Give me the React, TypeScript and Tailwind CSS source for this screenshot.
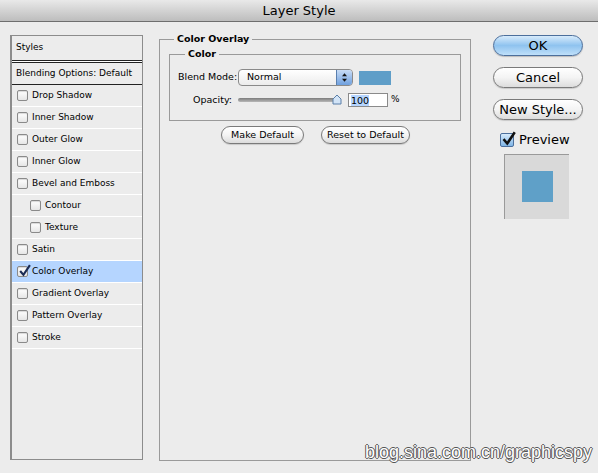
const font = "font-['Lucida_Grande','DejaVu_Sans',sans-serif]";

function Check({ checked = false }: { checked?: boolean }) {
  return (
    <div className="relative h-[11px] w-[11px] shrink-0 rounded-[2px] border border-[#8a8a8a] bg-gradient-to-b from-white to-[#e6e6e6] shadow-[inset_0_1px_1px_rgba(0,0,0,0.15)]">
      {checked && (
        <svg viewBox="0 0 12 12" className="absolute -top-[3px] left-[0px] h-[13px] w-[13px]">
          <path d="M2 6.5 L5 10 L11 1" fill="none" stroke="#1b2c55" strokeWidth="2" />
        </svg>
      )}
    </div>
  );
}

const rows: { label: string; indent?: boolean; checked?: boolean }[] = [
  { label: "Drop Shadow" },
  { label: "Inner Shadow" },
  { label: "Outer Glow" },
  { label: "Inner Glow" },
  { label: "Bevel and Emboss" },
  { label: "Contour", indent: true },
  { label: "Texture", indent: true },
  { label: "Satin" },
  { label: "Color Overlay", checked: true },
  { label: "Gradient Overlay" },
  { label: "Pattern Overlay" },
  { label: "Stroke" },
];

function Pill({ children, className = "" }: { children: React.ReactNode; className?: string }) {
  return (
    <div
      className={`flex items-center justify-center rounded-full border border-[#7a7a7a] bg-gradient-to-b from-white via-[#f4f4f4] to-[#dcdcdc] text-black shadow-[0_1px_1px_rgba(0,0,0,0.15)] ${className}`}
    >
      {children}
    </div>
  );
}

export default function App() {
  return (
    <div className={`relative h-[473px] w-[598px] overflow-hidden bg-[#ececec] ${font} text-black`}>
      {/* Title bar */}
      <div className="flex h-[22px] items-center justify-center border-b border-[#6e6e6e] bg-gradient-to-b from-[#e9e9e9] to-[#bdbdbd] text-[13px]">
        Layer Style
      </div>

      <div className="flex pt-[13px]">
        {/* Left list */}
        <div className="ml-[10px] flex h-[425px] w-[133px] flex-col border border-l-2 border-[#8c8c8c] bg-[#ececec] text-[9px]">
          <div className="flex h-[24px] items-center pl-[4px]">Styles</div>
          <div className="h-[1px] bg-[#222]" />
          <div className="h-[1px] bg-white" />
          <div className="h-[1px] bg-[#222]" />
          <div className="flex h-[21px] items-center pl-[4px]">Blending Options: Default</div>
          <div className="h-[1px] bg-[#222]" />
          {rows.map((r) => (
            <div
              key={r.label}
              className={`flex h-[22px] items-center gap-[4px] border-b border-white ${r.indent ? "pl-[18px]" : "pl-[5px]"} ${r.checked ? "bg-[#b5d5ff]" : ""}`}
            >
              <Check checked={r.checked} />
              <span>{r.label}</span>
            </div>
          ))}
        </div>

        {/* Color overlay group */}
        <div className="relative ml-[16px] mt-[4px] h-[422px] w-[312px] border border-[#9a9a9a] text-[9.5px]">
          <div className="absolute -top-[8px] left-[14px] bg-[#ececec] px-[3px] font-bold">Color Overlay</div>

          <div className="relative ml-[9px] mt-[14px] h-[67px] w-[292px] border border-[#9a9a9a]">
            <div className="absolute -top-[8px] left-[15px] bg-[#ececec] px-[3px] font-bold">Color</div>

            <div className="mt-[14px] flex items-center">
              <span className="ml-[8px] w-[60px]">Blend Mode:</span>
              <div className="flex h-[17px] w-[115px] items-center rounded-[4px] border border-[#8a8a8a] bg-gradient-to-b from-white to-[#ececec]">
                <span className="flex-1 pl-[8px]">Normal</span>
                <div className="flex h-full w-[16px] items-center justify-center rounded-r-[3px] border-l border-[#5a7fae] bg-gradient-to-b from-[#c8dcf5] to-[#6fa0de]">
                  <svg viewBox="0 0 6 10" className="h-[9px] w-[5px]">
                    <path d="M3 0 L6 3.5 L0 3.5 Z M3 10 L6 6.5 L0 6.5 Z" fill="#111" />
                  </svg>
                </div>
              </div>
              <div className="ml-[6px] h-[14px] w-[32px] bg-[#5f9ec8]" />
            </div>

            <div className="mt-[7px] flex items-center">
              <span className="ml-[23px] w-[45px]">Opacity:</span>
              <div className="relative flex h-[12px] w-[104px] items-center">
                <div className="h-[4px] w-[100px] rounded-full bg-gradient-to-b from-[#7c7c7c] to-[#b8b8b8]" />
                <svg viewBox="0 0 10 11" className="absolute right-[0px] top-[0px] h-[11px] w-[10px]">
                  <path d="M1 10 L1 5 L5 1 L9 5 L9 10 Z" fill="#d2e4f7" stroke="#5b7fa8" strokeWidth="1" />
                </svg>
              </div>
              <div className="ml-[6px] flex h-[14px] w-[40px] items-center border border-[#8a8a8a] bg-white pl-[2px]">
                <span className="bg-[#b5d5ff] leading-[11px]">100</span>
              </div>
              <span className="ml-[3px] text-[9px]">%</span>
            </div>
          </div>

          <div className="mt-[5px] flex">
            <Pill className="ml-[61px] h-[18px] w-[83px]">Make Default</Pill>
            <Pill className="ml-[17px] h-[18px] w-[89px]">Reset to Default</Pill>
          </div>
        </div>

        {/* Right buttons */}
        <div className="ml-[22px] flex w-[90px] flex-col text-[13px]">
          <div className="flex h-[21px] items-center justify-center rounded-full border border-[#4c6f9c] bg-gradient-to-b from-[#d7ebfb] via-[#8fc3ef] to-[#bfe0fa] shadow-[0_1px_1px_rgba(0,0,0,0.2)]">
            OK
          </div>
          <Pill className="mt-[11px] h-[21px]">Cancel</Pill>
          <Pill className="mt-[11px] h-[21px]">New Style...</Pill>
          <div className="ml-[7px] mt-[10px] flex items-center gap-[5px]">
            <div className="relative h-[14px] w-[14px] rounded-[2px] border border-[#4c6f9c] bg-gradient-to-b from-[#d7ebfb] to-[#7fb5e6]">
              <svg viewBox="0 0 12 12" className="absolute -top-[3px] left-[0px] h-[15px] w-[15px]">
                <path d="M2 6.5 L5 10 L11 1" fill="none" stroke="#111" strokeWidth="2" />
              </svg>
            </div>
            <span>Preview</span>
          </div>
          <div className="ml-[11px] mt-[4px] flex h-[65px] w-[65px] items-center justify-center border-l border-t border-[#9a9a9a] bg-[#d9d9d9]">
            <div className="h-[31px] w-[31px] bg-[#5fa0c8]" />
          </div>
        </div>
      </div>

      <div className="absolute bottom-[7px] right-[6px] font-['Liberation_Sans',sans-serif] text-[18px] text-white [text-shadow:-1px_0_#555,1px_0_#555,0_-1px_#555,0_1px_#555]">
        blog.sina.com.cn/graphicspy
      </div>
    </div>
  );
}
